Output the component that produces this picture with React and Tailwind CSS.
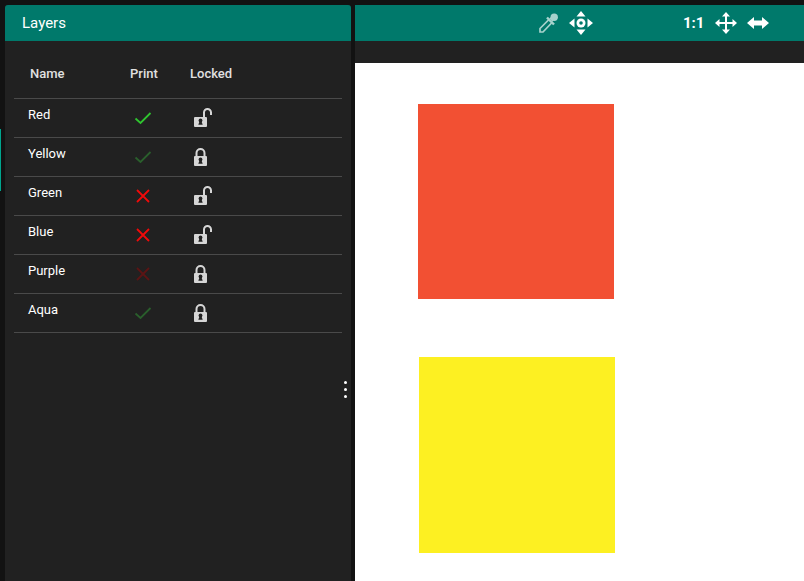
const LAYERS = [
  { name: 'Red', print: true, printDim: false, locked: false },
  { name: 'Yellow', print: true, printDim: true, locked: true },
  { name: 'Green', print: false, printDim: false, locked: false },
  { name: 'Blue', print: false, printDim: false, locked: false },
  { name: 'Purple', print: false, printDim: true, locked: true },
  { name: 'Aqua', print: true, printDim: true, locked: true },
];

function CheckMark({ dim }) {
  return (
    <svg width="18" height="14" viewBox="0 0 18 14" className={dim ? 'text-[#2a5f2c]' : 'text-[#2fc42f]'}>
      <path d="M1.5 7.5 L6.5 12 L16.5 2" fill="none" stroke="currentColor" strokeWidth="1.8" />
    </svg>
  );
}

function CrossMark({ dim }) {
  return (
    <svg width="14" height="14" viewBox="0 0 14 14" className={dim ? 'text-[#5c1414]' : 'text-[#f00a0a]'}>
      <path d="M1 1 L13 13 M13 1 L1 13" fill="none" stroke="currentColor" strokeWidth="1.8" />
    </svg>
  );
}

function LockIcon({ locked }) {
  return (
    <svg width="20" height="20" viewBox="0 0 20 20" className="text-[#d6d6d6]">
      {locked ? (
        <path d="M3 10 V6 a4 4 0 0 1 8 0 V10" transform="translate(0.5 0)" fill="none" stroke="currentColor" strokeWidth="2" />
      ) : (
        <path d="M11 9 V4.5 a3.5 3.5 0 0 1 7 0 V7" fill="none" stroke="currentColor" strokeWidth="2" />
      )}
      <rect x="1" y="9" width="13" height="10" rx="1" fill="currentColor" />
      <circle cx="7.5" cy="12.5" r="1.9" fill="#212121" />
      <path d="M6.7 13 h1.6 l1.4 3.8 h-4.4 z" fill="#212121" />
    </svg>
  );
}

function DropperIcon() {
  return (
    <svg width="21" height="22" viewBox="0 0 21 22" className="text-[#a6d2cc]">
      <path d="M2 20 L2 16.5 L11 7.5 L14 10.5 L5 20 Z" fill="none" stroke="currentColor" strokeWidth="1.7" />
      <path d="M9 5.5 L16 12.5" fill="none" stroke="currentColor" strokeWidth="2.4" />
      <circle cx="16.2" cy="5.2" r="3.7" fill="currentColor" />
      <path d="M11.5 6.5 L14.5 9.5 L18 6 L15 3 Z" fill="currentColor" />
    </svg>
  );
}

function MoveDotIcon() {
  return (
    <svg width="24" height="24" viewBox="0 0 24 24" fill="white">
      <path d="M12 0 L16.5 5.5 H7.5 Z M12 24 L16.5 18.5 H7.5 Z M0 12 L5.5 7.5 V16.5 Z M24 12 L18.5 7.5 V16.5 Z" />
      <circle cx="12" cy="12" r="4.5" />
      <circle cx="12" cy="12" r="1.8" fill="#00796b" />
    </svg>
  );
}

function MoveIcon() {
  return (
    <svg width="22" height="22" viewBox="0 0 22 22" fill="white">
      <path d="M11 0 L15 4.5 H7 Z M11 22 L15 17.5 H7 Z M0 11 L4.5 7 V15 Z M22 11 L17.5 7 V15 Z" />
      <path d="M10 4 h2 v6 h6 v2 h-6 v6 h-2 v-6 h-6 v-2 h6 z" />
    </svg>
  );
}

function WidthIcon() {
  return (
    <svg width="22" height="14" viewBox="0 0 22 14" fill="white">
      <path d="M0 7 L7 1 V4.5 H15 V1 L22 7 L15 13 V9.5 H7 V13 Z" />
    </svg>
  );
}

function LayerRow({ layer }) {
  return (
    <div className="flex h-[39px] border-b border-[#4a4a4a]">
      <div className="w-[108px] pt-[6px] pl-[14px] text-[13px] leading-[20px] font-normal text-white">{layer.name}</div>
      <div className={`w-[62px] pt-[12px] ${layer.print ? 'pl-[12px]' : 'pl-[14px]'}`}>
        {layer.print ? <CheckMark dim={layer.printDim} /> : <CrossMark dim={layer.printDim} />}
      </div>
      <div className="pt-[9px] pl-[9px]">
        <LockIcon locked={layer.locked} />
      </div>
    </div>
  );
}

export default function App() {
  return (
    <div className="flex h-[581px] gap-[4px] overflow-hidden bg-[#121212] pt-[5px] pl-[5px] font-['Roboto',sans-serif]">
      <div className="absolute top-[129px] left-0 h-[62px] w-[1px] bg-[#00a58e]" />

      <div className="flex w-[346px] shrink-0 flex-col overflow-hidden rounded-t-[3px] bg-[#212121]">
        <div className="flex h-[36px] items-center bg-[#00796b] pl-[17px] text-[15px] font-normal text-white">Layers</div>
        <div className="relative flex-1 px-[9px]">
          <div className="flex h-[58px] items-center border-b border-[#4a4a4a] pt-[8px] text-[13px] font-medium text-[#e0e0e0]">
            <div className="w-[116px] pl-[16px]">Name</div>
            <div className="w-[60px]">Print</div>
            <div>Locked</div>
          </div>
          {LAYERS.map((layer) => (
            <LayerRow key={layer.name} layer={layer} />
          ))}
          <div className="absolute top-[340px] right-[4px] flex flex-col gap-[4px]">
            <span className="h-[3px] w-[3px] rounded-full bg-white" />
            <span className="h-[3px] w-[3px] rounded-full bg-white" />
            <span className="h-[3px] w-[3px] rounded-full bg-white" />
          </div>
        </div>
      </div>

      <div className="flex min-w-0 flex-1 flex-col">
        <div className="flex h-[36px] items-center bg-[#00796b] text-white">
          <div className="ml-[183px]"><DropperIcon /></div>
          <div className="ml-[10px]"><MoveDotIcon /></div>
          <span className="ml-[90px] text-[15px] font-bold">1:1</span>
          <div className="ml-[11px]"><MoveIcon /></div>
          <div className="ml-[10px]"><WidthIcon /></div>
        </div>
        <div className="h-[22px] bg-[#212121]" />
        <div className="flex-1 bg-white pt-[41px]">
          <div className="ml-[63px] h-[195px] w-[196px] bg-[#f25033]" />
          <div className="mt-[58px] ml-[64px] h-[196px] w-[196px] bg-[#fdf022]" />
        </div>
      </div>
    </div>
  );
}
